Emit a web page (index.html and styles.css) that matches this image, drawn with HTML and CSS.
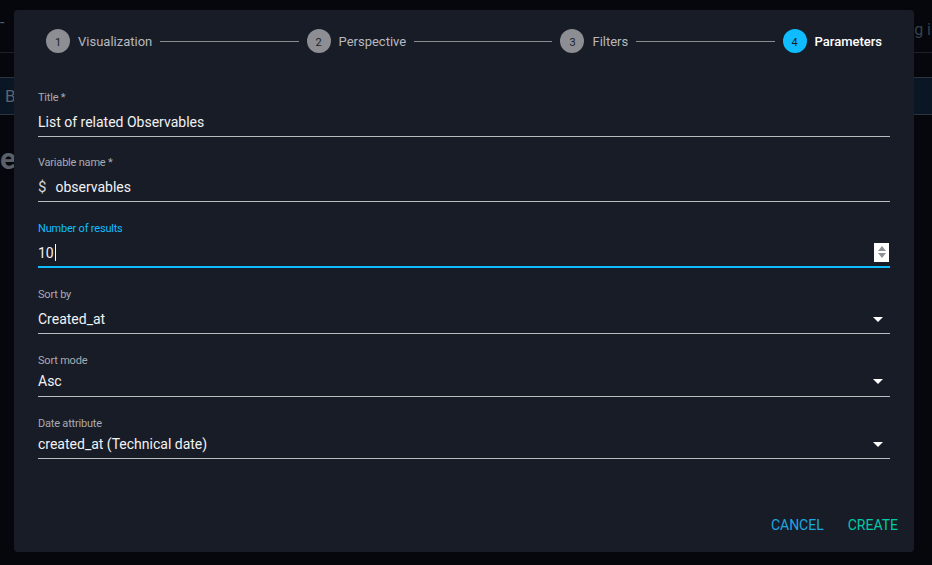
FILE: index.html
```html
<!DOCTYPE html>
<html lang="en">
<head>
    <meta charset="UTF-8">
    <meta name="viewport" content="width=device-width, initial-scale=1.0">
    <title>Create widget - Parameters</title>
    <link rel="stylesheet" href="styles.css">
</head>
<body>
    <!-- Page behind the dialog -->
    <div class="page">
        <div class="topbar">
            <span class="topbar-dash">-</span>
            <span class="topbar-search">g i</span>
        </div>
        <div class="toolbar">
            <span class="toolbar-btn">B</span>
        </div>
        <div class="page-title">e</div>
    </div>

    <!-- Dialog -->
    <div class="modal">
        <div class="stepper">
            <div class="step">
                <span class="step-icon">1</span>
                <span class="step-label">Visualization</span>
            </div>
            <div class="step-line"></div>
            <div class="step">
                <span class="step-icon">2</span>
                <span class="step-label">Perspective</span>
            </div>
            <div class="step-line"></div>
            <div class="step">
                <span class="step-icon">3</span>
                <span class="step-label">Filters</span>
            </div>
            <div class="step-line"></div>
            <div class="step active">
                <span class="step-icon">4</span>
                <span class="step-label">Parameters</span>
            </div>
        </div>

        <div class="form">
            <div class="field first">
                <label class="field-label">Title *</label>
                <div class="field-input">
                    <span class="field-value">List of related Observables</span>
                </div>
            </div>

            <div class="field">
                <label class="field-label">Variable name *</label>
                <div class="field-input">
                    <span class="adornment">$</span>
                    <span class="field-value">observables</span>
                </div>
            </div>

            <div class="field focused">
                <label class="field-label">Number of results</label>
                <div class="field-input">
                    <span class="field-value">10<span class="caret"></span></span>
                    <span class="spinner">
                        <span class="spin-up"></span>
                        <span class="spin-down"></span>
                    </span>
                </div>
            </div>

            <div class="field">
                <label class="field-label">Sort by</label>
                <div class="field-input select">
                    <span class="field-value">Created_at</span>
                    <span class="arrow"></span>
                </div>
            </div>

            <div class="field compact">
                <label class="field-label">Sort mode</label>
                <div class="field-input select">
                    <span class="field-value">Asc</span>
                    <span class="arrow"></span>
                </div>
            </div>

            <div class="field compact last">
                <label class="field-label">Date attribute</label>
                <div class="field-input select">
                    <span class="field-value">created_at (Technical date)</span>
                    <span class="arrow"></span>
                </div>
            </div>
        </div>

        <div class="actions">
            <button class="btn btn-cancel">Cancel</button>
            <button class="btn btn-create">Create</button>
        </div>
    </div>
</body>
</html>
```

FILE: styles.css
```css
body {
    margin: 0;
    width: 932px;
    height: 565px;
    overflow: hidden;
    background-color: #05070c;
    font-family: Roboto, "Liberation Sans", sans-serif;
    color: #ffffff;
    position: relative;
}

/* Page behind the dialog */
.page {
    height: 100%;
}

.topbar {
    height: 53px;
    border-bottom: 1px solid #1c212b;
    display: flex;
    align-items: center;
    justify-content: space-between;
    box-sizing: border-box;
    font-size: 16px;
}

.topbar-dash {
    margin-top: -8px;
    color: #55606b;
}

.topbar-search {
    margin-top: 6px;
    margin-right: 1px;
    color: #34424e;
}

.toolbar {
    margin-top: 24px;
    height: 36px;
    border-top: 1px solid #2b3440;
    border-bottom: 1px solid #2b3440;
    background-color: #0a1624;
    display: flex;
    align-items: center;
}

.toolbar-btn {
    padding-left: 5px;
    color: #5c6670;
    font-size: 17px;
}

.page-title {
    margin-top: 26px;
    font-size: 30px;
    font-weight: 700;
    color: #5b6068;
}

/* Dialog */
.modal {
    position: absolute;
    left: 14px;
    top: 10px;
    width: 900px;
    height: 542px;
    background-color: #181c27;
    border-radius: 4px;
    box-sizing: border-box;
    display: flex;
    flex-direction: column;
}

.stepper {
    display: flex;
    align-items: center;
    padding: 19px 32px 0 32px;
    height: 24px;
}

.step {
    display: flex;
    align-items: center;
    gap: 8px;
}

.step-icon {
    width: 24px;
    height: 24px;
    border-radius: 50%;
    background-color: #8c8e94;
    color: #1b1e26;
    font-size: 11px;
    display: flex;
    align-items: center;
    justify-content: center;
    padding-top: 2px;
    box-sizing: border-box;
}

.step-label {
    font-size: 13px;
    color: #b7b9be;
}

.step.active .step-icon {
    background-color: #0fbcff;
}

.step.active .step-label {
    color: #ffffff;
    font-weight: 500;
}

.step-line {
    flex: 1;
    height: 1px;
    background-color: #8a8c90;
    margin: 0 8px;
}

.form {
    padding: 38px 24px 0 24px;
}

.field {
    margin-bottom: 20px;
}

.field.first {
    margin-bottom: 19px;
}

.field-label {
    display: block;
    font-size: 11px;
    line-height: 13px;
    color: #a9abb0;
    letter-spacing: -0.2px;
}

.field-input {
    display: flex;
    align-items: center;
    margin-top: 9px;
    padding-bottom: 5px;
    border-bottom: 1px solid #b9bbbf;
    height: 18px;
}

.field-value {
    font-size: 14px;
    line-height: 18px;
    color: #f2f2f3;
    flex: 1;
    white-space: nowrap;
}

.adornment {
    font-size: 15px;
    color: #d4d5d8;
    margin-right: 9px;
}

.field.focused .field-label {
    color: #0fbcff;
}

.field.focused .field-input {
    border-bottom: 2px solid #0fbcff;
    padding-bottom: 4px;
}

.caret {
    display: inline-block;
    width: 1px;
    height: 17px;
    background-color: #ffffff;
    vertical-align: -3px;
    margin-left: 1px;
}

.spinner {
    width: 15px;
    height: 19px;
    margin-top: -2px;
    background-color: #ffffff;
    display: flex;
    flex-direction: column;
    align-items: center;
    justify-content: center;
    gap: 2px;
    margin-right: 1px;
}

.spin-up {
    width: 0;
    height: 0;
    border-left: 4px solid transparent;
    border-right: 4px solid transparent;
    border-bottom: 5px solid #8f9196;
}

.spin-down {
    width: 0;
    height: 0;
    border-left: 4px solid transparent;
    border-right: 4px solid transparent;
    border-top: 5px solid #8f9196;
}

.arrow {
    width: 0;
    height: 0;
    border-left: 5px solid transparent;
    border-right: 5px solid transparent;
    border-top: 5px solid #ffffff;
    margin-right: 7px;
}

.field.compact .field-input {
    margin-top: 5px;
    padding-bottom: 6px;
}

.field.last .field-input {
    padding-bottom: 5px;
}

.actions {
    margin-top: auto;
    display: flex;
    justify-content: flex-end;
    gap: 8px;
    padding: 0 8px 11px 0;
}

.btn {
    background: none;
    border: none;
    font-family: Roboto, "Liberation Sans", sans-serif;
    font-size: 14px;
    font-weight: 400;
    text-transform: uppercase;
    padding: 6px 8px;
    line-height: 20px;
    cursor: pointer;
}

.btn-cancel {
    color: #1fa7e0;
}

.btn-create {
    color: #00c9a7;
}
```
